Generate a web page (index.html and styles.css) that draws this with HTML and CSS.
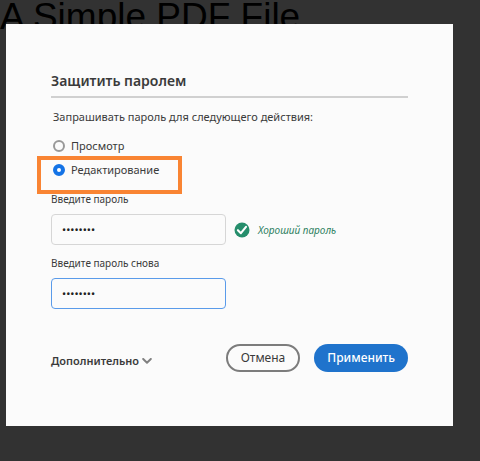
FILE: index.html
```
<!DOCTYPE html>
<html lang="ru">
<head>
  <meta charset="UTF-8" />
  <meta name="viewport" content="width=device-width, initial-scale=1.0"/>
  <title>Защитить паролем</title>
  <link rel="stylesheet" href="styles.css">
</head>
<body>

  <div class="document-title">A Simple PDF File</div>

  <form class="dialog" role="dialog" aria-labelledby="dialog-title">
    <h1 id="dialog-title">Защитить паролем</h1>

    <fieldset class="actions">
      <legend>Запрашивать пароль для следующего действия:</legend>
      <div class="option">
        <input type="radio" id="view" name="action" value="view" />
        <label for="view">Просмотр</label>
      </div>
      <div class="option highlighted">
        <input type="radio" id="edit" name="action" value="edit" checked />
        <label for="edit">Редактирование</label>
      </div>
    </fieldset>

    <div class="field">
      <label for="password">Введите пароль</label>
      <div class="field-row">
        <input type="password" id="password" value="password" />
        <svg class="check" viewBox="0 0 16 16" aria-hidden="true">
          <circle cx="8" cy="8" r="7.5" fill="#268e6c"/>
          <path d="M3.9 8.2 L6.9 11.2 L12 4.9" fill="none" stroke="#fff" stroke-width="2.1" stroke-linecap="round" stroke-linejoin="round"/>
        </svg>
        <span class="strength">Хороший пароль</span>
      </div>
    </div>

    <div class="field">
      <label for="confirm">Введите пароль снова</label>
      <div class="field-row">
        <input type="password" id="confirm" class="active" value="password" />
      </div>
    </div>

    <div class="footer">
      <button type="button" class="more">
        Дополнительно
        <svg class="chevron" viewBox="0 0 10 6" aria-hidden="true">
          <path d="M1.2 1 L5 4.7 L8.8 1" fill="none" stroke="#808080" stroke-width="2" stroke-linecap="round" stroke-linejoin="round"/>
        </svg>
      </button>
      <button type="button" class="btn cancel">Отмена</button>
      <button type="submit" class="btn apply">Применить</button>
    </div>
  </form>

</body>
</html>
```

FILE: styles.css
```
*,
*::after {
  box-sizing: border-box;
}

body {
  margin: 0;
  padding: 24px 27px 34px 6px;
  background: #323232;
  color: #3a3a3a;
  font-family: "Noto Sans", "Open Sans", sans-serif;
  font-size: 11px;
  line-height: 16px;
}

/* page of the document behind the dialog */
.document-title {
  position: absolute;
  top: -3px;
  left: 0;
  color: #000;
  font-family: "Liberation Sans", Arial, sans-serif;
  font-size: 37px;
  line-height: 40px;
  white-space: nowrap;
}

.dialog {
  position: relative;
  padding: 46px 45px 54px;
  background: #fbfbfb;
}

h1 {
  margin: 0 0 11px;
  padding-bottom: 4px;
  border-bottom: 2px solid #d0d0d0;
  font-size: 14px;
  font-weight: 600;
  line-height: 22px;
}

.actions {
  margin: 0 0 9px;
  padding: 0;
  border: none;
}

legend {
  margin-bottom: 9px;
  padding: 0 2px;
}

.option {
  display: flex;
  align-items: center;
  gap: 6px;
  height: 24px;
  padding-left: 2px;
}

.option input {
  appearance: none;
  width: 12px;
  height: 12px;
  margin: 0;
  border: 2px solid #999;
  border-radius: 50%;
}

.option input:checked {
  border: 4px solid #1473e6;
  background: #fff;
}

.highlighted {
  position: relative;
}

/* frame drawn over the selected option */
.highlighted::after {
  content: "";
  position: absolute;
  top: -2px;
  left: -14px;
  width: 145px;
  height: 38px;
  border: 4px solid #f98433;
  pointer-events: none;
}

.field {
  margin-bottom: 10px;
  font-size: 10px;
}

.field label {
  display: block;
  margin-bottom: 7px;
}

.field-row {
  display: flex;
  align-items: center;
  gap: 8px;
}

.field input {
  width: 175px;
  height: 31px;
  padding: 0 10px;
  border: 1px solid #d6d6d6;
  border-radius: 4px;
  background: #fbfbfb;
  color: #222;
  font-family: inherit;
  font-size: 11px;
}

.field input.active {
  border-color: #5a9bea;
}

.check {
  width: 16px;
  height: 16px;
}

.strength {
  color: #2c8060;
  font-style: italic;
}

.footer {
  display: flex;
  align-items: center;
  gap: 14px;
  margin-top: 35px;
}

button {
  border: none;
  color: inherit;
  font-family: inherit;
  font-size: 11px;
  line-height: 16px;
  cursor: pointer;
}

.more {
  display: flex;
  align-items: center;
  gap: 3px;
  margin-right: auto;
  padding: 6px 0 0;
  background: none;
  font-weight: 600;
}

.chevron {
  width: 10px;
  height: 6px;
}

.btn {
  height: 28px;
  padding: 0 13px;
  border-radius: 14px;
  font-size: 12px;
}

.cancel {
  border: 2px solid #7c7c7c;
  background: #fbfbfb;
}

.apply {
  background: #1f73cc;
  color: #fff;
  font-weight: 500;
}
```
